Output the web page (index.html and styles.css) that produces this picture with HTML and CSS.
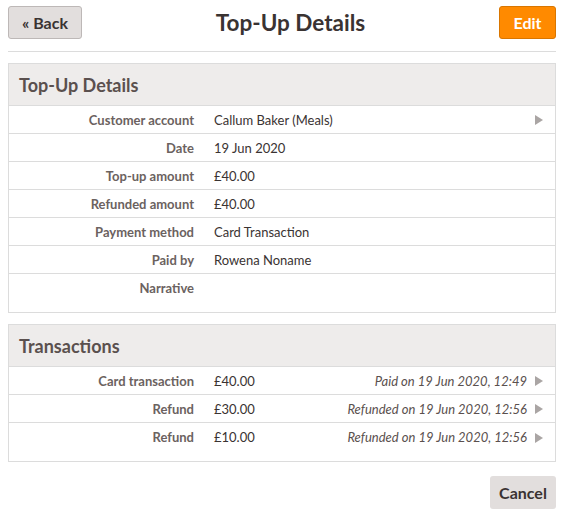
FILE: index.html
```html
<!DOCTYPE html>
<html>
<head>
<meta charset="utf-8">
<link rel="stylesheet" href="styles.css">
</head>
<body>
<div class="page">
  <div class="topbar">
    <button class="btn btn-back">« Back</button>
    <h1 class="title">Top-Up Details</h1>
    <button class="btn btn-edit">Edit</button>
  </div>

  <section class="panel">
    <h2 class="panel-head">Top-Up Details</h2>
    <div class="row">
      <div class="label">Customer account</div>
      <div class="value">Callum Baker (Meals)</div>
      <span class="arrow"></span>
    </div>
    <div class="row">
      <div class="label">Date</div>
      <div class="value">19 Jun 2020</div>
    </div>
    <div class="row">
      <div class="label">Top-up amount</div>
      <div class="value">£40.00</div>
    </div>
    <div class="row">
      <div class="label">Refunded amount</div>
      <div class="value">£40.00</div>
    </div>
    <div class="row">
      <div class="label">Payment method</div>
      <div class="value">Card Transaction</div>
    </div>
    <div class="row">
      <div class="label">Paid by</div>
      <div class="value">Rowena Noname</div>
    </div>
    <div class="row row-last">
      <div class="label">Narrative</div>
      <div class="value"></div>
    </div>
  </section>

  <section class="panel">
    <h2 class="panel-head">Transactions</h2>
    <div class="row">
      <div class="label">Card transaction</div>
      <div class="value">£40.00</div>
      <div class="note">Paid on 19 Jun 2020, 12:49</div>
      <span class="arrow"></span>
    </div>
    <div class="row">
      <div class="label">Refund</div>
      <div class="value">£30.00</div>
      <div class="note">Refunded on 19 Jun 2020, 12:56</div>
      <span class="arrow"></span>
    </div>
    <div class="row row-last">
      <div class="label">Refund</div>
      <div class="value">£10.00</div>
      <div class="note">Refunded on 19 Jun 2020, 12:56</div>
      <span class="arrow"></span>
    </div>
  </section>

  <div class="footer">
    <button class="btn btn-cancel">Cancel</button>
  </div>
</div>
</body>
</html>
```

FILE: styles.css
```css
* { box-sizing: border-box; }
html, body { margin: 0; padding: 0; background: #fff; }
body {
  font-family: Lato, "Open Sans", "Liberation Sans", sans-serif;
  color: #3a3332;
  font-size: 13px;
}
.page { padding: 6px 9px 0 8px; }

.topbar {
  display: flex;
  align-items: center;
  justify-content: space-between;
  padding-bottom: 12px;
  border-bottom: 1px solid #dcdcdc;
}
.title {
  margin: 0;
  font-size: 22.5px;
  font-weight: 700;
  color: #3a3332;
}
.btn {
  font-family: inherit;
  font-weight: 700;
  font-size: 16px;
  height: 33px;
  border-radius: 3px;
  padding: 0 13px;
  cursor: pointer;
}
.btn-back {
  background: #e2dedd;
  border: 1px solid #bdb8b7;
  color: #3a3332;
  width: 74px;
}
.btn-edit {
  background: #ff8a00;
  border: 1px solid #d97600;
  color: #fff;
  width: 57px;
}

.panel {
  margin-top: 11px;
  border: 1px solid #dcdcdc;
}
.panel-head {
  margin: 0;
  background: #eeeceb;
  font-size: 18px;
  font-weight: 700;
  color: #5a504e;
  height: 42px;
  line-height: 42px;
  padding: 0 10px;
  border-bottom: 1px solid #dcdcdc;
}
.row {
  display: flex;
  align-items: center;
  height: 28px;
  border-bottom: 1px solid #dcdcdc;
  padding-right: 12px;
}
.row-last {
  border-bottom: none;
  height: 38px;
  align-items: flex-start;
  padding-top: 6px;
}
.label {
  width: 185px;
  flex: none;
  text-align: right;
  font-weight: 700;
  color: #6b6260;
}
.value {
  margin-left: 20px;
  flex: 1;
  color: #3a3332;
}
.note {
  font-style: italic;
  color: #5a504e;
  margin-right: 8px;
}
.arrow {
  width: 0;
  height: 0;
  border-top: 5px solid transparent;
  border-bottom: 5px solid transparent;
  border-left: 8px solid #aaa5a4;
  margin-top: 1px;
}
.row-last .arrow { margin-top: 4px; }

.footer {
  display: flex;
  justify-content: flex-end;
  margin-top: 14px;
}
.btn-cancel {
  background: #e2dedd;
  border: none;
  color: #3a3332;
  width: 66px;
  height: 33px;
  padding: 0;
}
```
